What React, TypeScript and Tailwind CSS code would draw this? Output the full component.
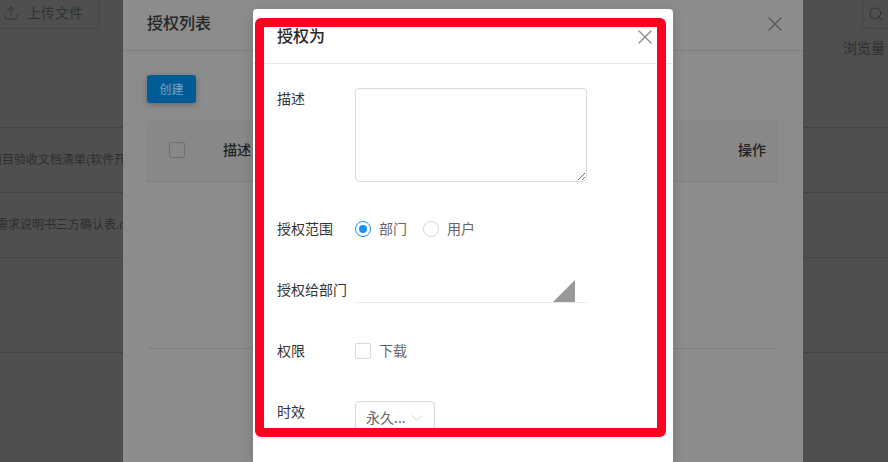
import { Upload, Search, X, ChevronDown } from "lucide-react"

const font = "font-['Noto_Sans_CJK_SC','Noto_Sans',sans-serif]"

function FormRow({ label, className, children }: { label: string; className: string; children: React.ReactNode }) {
  return (
    <div className={`flex items-start ${className}`}>
      <div className="h-[22px] w-[78px] shrink-0 text-[14px] leading-[20px] text-[#333]">{label}</div>
      {children}
    </div>
  )
}

function Background() {
  return (
    <div className="flex h-full flex-col bg-[#4e4f4e] text-[#2e2e2e]">
      <div className="flex h-[37px] justify-between text-[14px]">
        <div className="-mt-[4px] -ml-[5px] flex h-[33px] w-[104px] items-center gap-[8px] rounded-[4px] border border-[#454545] pl-[7px] text-[#333]">
          <Upload size={16} strokeWidth={1.4} />
          <span>上传文件</span>
        </div>
        <div className="-mt-[4px] -mr-[10px] flex h-[33px] w-[36px] items-start rounded-[4px] border border-[#454545] pl-[5px] pt-[9px]">
          <Search size={16} strokeWidth={1.2} className="text-[#2a2a2a]" />
        </div>
      </div>
      <div className="flex h-[91px] justify-end border-b border-[#434343] pr-[3px] text-[14px] leading-[20px]">浏览量</div>
      <div className="flex h-[65px] items-center border-b border-[#434343] pb-[2px] text-[12px] whitespace-nowrap">
        <span className="-ml-[10px]">项目验收文档清单(软件开发</span>
      </div>
      <div className="flex h-[65px] items-center border-b border-[#434343] pb-[2px] text-[12px] whitespace-nowrap">
        <span className="-ml-[4px]">需求说明书三方确认表.docx</span>
      </div>
      <div className="h-[95px] border-b border-[#434343]" />
    </div>
  )
}

function ListModal() {
  return (
    <div className="absolute inset-y-0 left-[123px] flex w-[680px] flex-col bg-[#8c8c8c]">
      <div className="flex h-[51px] items-center justify-between border-b border-[#7e7e7e] pl-[24px] pr-[16px]">
        <span className="-mt-[6px] text-[16px] font-medium text-[#262626]">授权列表</span>
        <X size={24} strokeWidth={1.2} className="-mt-[2px] text-[#555]" />
      </div>
      <div className="flex flex-col px-[24px]">
        <button className="mt-[24px] h-[28px] w-[49px] rounded-[3px] bg-[#005b96] text-[12px] text-[#7fa3bd] shadow-[0_2px_6px_rgba(0,0,0,0.25)]">
          创建
        </button>
        <div className="mt-[17px] flex h-[62px] items-center rounded-t-[3px] border-b border-[#7e7e7e] bg-[#888888] pb-[2px] text-[14px] font-medium text-[#222]">
          <div className="ml-[22px] h-[16px] w-[16px] rounded-[2px] border border-[#6f6f6f]" />
          <span className="ml-[38px]">描述</span>
          <span className="ml-auto mr-[13px]">操作</span>
        </div>
        <div className="h-[167px] rounded-b-[3px] border-b border-[#7e7e7e]" />
      </div>
    </div>
  )
}

function GrantModal() {
  return (
    <div className="absolute left-[253px] top-[9px] bottom-0 w-[420px] overflow-hidden rounded-t-[4px] bg-white shadow-[0_4px_12px_rgba(0,0,0,0.15)]">
      <div className="flex h-[55px] items-center justify-between border-b border-[#e8e8e8] pl-[24px] pr-[16px]">
        <span className="-mt-[2px] text-[16px] font-medium text-[#262626]">授权为</span>
        <X size={24} strokeWidth={1.2} className="mt-[1px] text-[#8c8c8c]" />
      </div>
      <div className="flex flex-col gap-[22px] px-[24px] pt-[24px]">
        <FormRow label="描述" className="h-[108px]">
          <textarea className="h-[94px] w-[232px] rounded-[4px] border border-[#d9d9d9] bg-white outline-none" />
        </FormRow>
        <FormRow label="授权范围" className="h-[39px]">
          <div className="flex h-[22px] items-center text-[14px] leading-[20px] text-[#666]">
            <span className="flex h-[16px] w-[16px] items-center justify-center rounded-full border border-[#1890ff]">
              <span className="h-[8px] w-[8px] rounded-full bg-[#1890ff]" />
            </span>
            <span className="mb-[2px] ml-[8px]">部门</span>
            <span className="ml-[16px] h-[16px] w-[16px] rounded-full border border-[#d9d9d9]" />
            <span className="mb-[2px] ml-[8px]">用户</span>
          </div>
        </FormRow>
        <FormRow label="授权给部门" className="h-[39px]">
          <div className="relative h-[24px] w-[232px] border-b border-[#e8e8e8]">
            <span className="absolute bottom-0 right-[12px] h-0 w-0 border-b-[22px] border-l-[22px] border-b-[#999] border-l-transparent" />
          </div>
        </FormRow>
        <FormRow label="权限" className="h-[39px]">
          <div className="flex h-[22px] items-center text-[14px] leading-[20px] text-[#666]">
            <span className="h-[16px] w-[16px] rounded-[2px] border border-[#d9d9d9]" />
            <span className="mb-[2px] ml-[8px]">下载</span>
          </div>
        </FormRow>
        <FormRow label="时效" className="h-[39px]">
          <div className="flex h-[33px] w-[80px] items-center rounded-[4px] border border-[#d9d9d9] pl-[10px] text-[14px] text-[#666]">
            <span>永久...</span>
            <ChevronDown size={20} strokeWidth={0.8} className="ml-[1px] text-[#bfbfbf]" />
          </div>
        </FormRow>
      </div>
    </div>
  )
}

export default function App() {
  return (
    <div className={`relative h-[462px] w-[888px] overflow-hidden ${font}`}>
      <Background />
      <ListModal />
      <GrantModal />
      {/* red annotation frame */}
      <div className="pointer-events-none absolute left-[255px] top-[18px] h-[419px] w-[411px] rounded-[6px] border-[9px] border-[#ff0020]" />
    </div>
  )
}
